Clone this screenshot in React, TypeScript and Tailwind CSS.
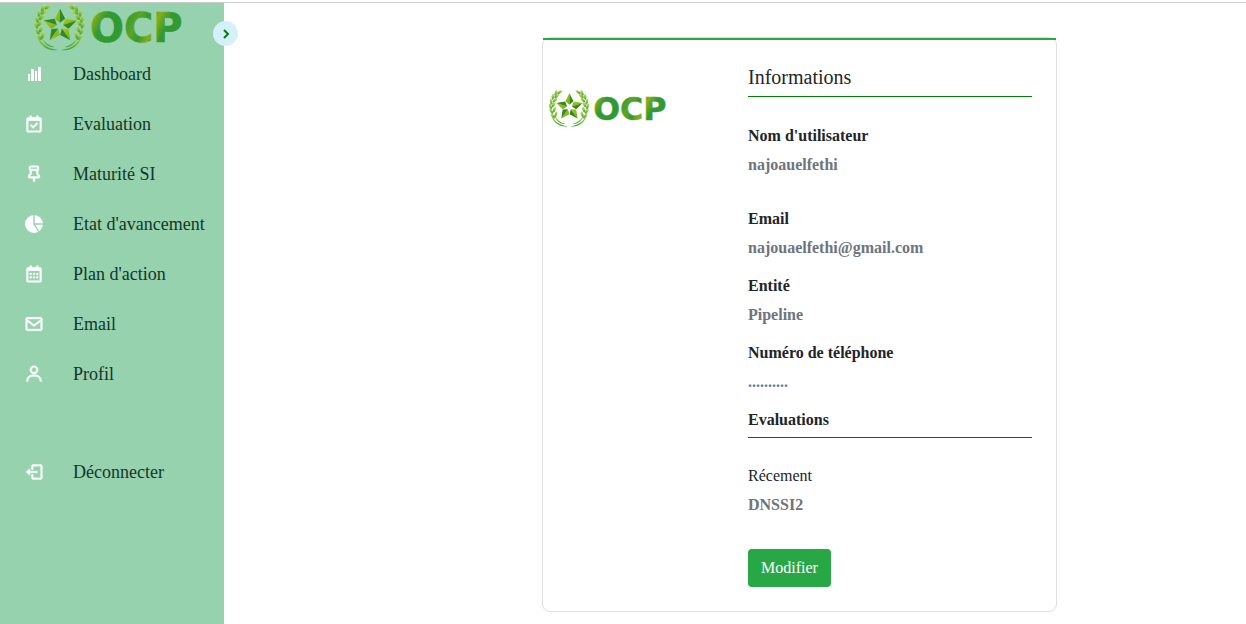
import { useId, type ReactNode } from "react";
import { BiCalendar, BiCalendarCheck, BiEnvelope, BiLogOut, BiPin, BiUser } from "react-icons/bi";

const leaves = [
  [5, 34, -42], [9, 32, 20], [3, 28, -32], [7, 26, 26], [2, 22, -22], [6, 20, 34],
  [3, 16, -12], [8, 14, 46], [5, 10, 2], [10, 9, 54], [9, 5, 20], [14, 4, 58],
];

function polar(radius: number, degrees: number) {
  const a = (degrees * Math.PI) / 180;
  return `${(26 + radius * Math.sin(a)).toFixed(2)},${(23 - radius * Math.cos(a)).toFixed(2)}`;
}

function Branch({ fill }: { fill: string }) {
  return (
    <g fill={fill}>
      <path d="M2 27C4 39 13 46 24 47C14 49 3 42 2 27Z" />
      <path d="M7 32C10 39 15 43 21 44C14 45 8 40 7 32Z" />
      {leaves.map(([x, y, r]) => (
        <ellipse key={`${x}-${y}`} cx={x} cy={y} rx="1.6" ry="3.8" transform={`rotate(${r} ${x} ${y})`} />
      ))}
    </g>
  );
}

function OcpLogo({ className }: { className: string }) {
  const id = useId();
  const word = `${id}word`;
  const leaf = `${id}leaf`;
  const tip = `${id}tip`;
  return (
    <svg viewBox="0 0 152 48" className={className} role="img" aria-label="OCP">
      <defs>
        <linearGradient id={word} x1="0" y1="0" x2="1" y2="0.25">
          <stop offset="0" stopColor="#3c9c2c" />
          <stop offset="0.1" stopColor="#86ad19" />
          <stop offset="0.22" stopColor="#329a30" />
          <stop offset="0.42" stopColor="#2f9a31" />
          <stop offset="0.56" stopColor="#5da525" />
          <stop offset="0.66" stopColor="#329a30" />
          <stop offset="0.76" stopColor="#86ad19" />
          <stop offset="0.88" stopColor="#329a30" />
        </linearGradient>
        <linearGradient id={leaf} x1="0" y1="0" x2="0" y2="1">
          <stop offset="0" stopColor="#c3dd86" />
          <stop offset="0.5" stopColor="#8cc43c" />
          <stop offset="1" stopColor="#3ba336" />
        </linearGradient>
        <linearGradient id={tip} x1="0" y1="0" x2="1" y2="1">
          <stop offset="0" stopColor="#b9c90c" />
          <stop offset="1" stopColor="#6aad1c" />
        </linearGradient>
      </defs>
      <Branch fill={`url(#${leaf})`} />
      <g transform="translate(51 0) scale(-1 1)">
        <Branch fill={`url(#${leaf})`} />
      </g>
      {[0, 72, 144, 216, 288].map((a) => (
        <g key={a}>
          <polygon points={`${polar(17.5, a)} ${polar(9, a - 35)} ${polar(3.2, a)}`} fill={`url(#${tip})`} />
          <polygon points={`${polar(17.5, a)} ${polar(9, a + 35)} ${polar(3.2, a)}`} fill="#2f8a20" />
        </g>
      ))}
      <text
        x="56"
        y="39"
        fontSize="40"
        fontWeight="700"
        fill={`url(#${word})`}
        stroke={`url(#${word})`}
        strokeWidth="0.6"
        className="font-['DejaVu_Sans',sans-serif]"
      >
        OCP
      </text>
    </svg>
  );
}

function BarsIcon() {
  return (
    <svg viewBox="0 0 20 20" className="size-5" fill="currentColor" aria-hidden="true">
      <rect x="4" y="10" width="2" height="7" />
      <rect x="7" y="5" width="3" height="12" />
      <rect x="11" y="7" width="2" height="10" />
      <rect x="14" y="3" width="3" height="14" />
    </svg>
  );
}

function PieIcon() {
  return (
    <svg viewBox="0 0 20 20" className="size-5" aria-hidden="true">
      <circle cx="10" cy="10" r="9" fill="currentColor" />
      <path d="M10 1V10H19M10 10L15 18" fill="none" stroke="#96d2ad" strokeWidth="1.4" />
    </svg>
  );
}

function NavItem({ icon, label }: { icon: ReactNode; label: string }) {
  return (
    <a href="#" className="flex h-[50px] items-center gap-[29px] pl-6 text-lg text-[#12372a]">
      <span className="flex w-5 justify-center text-xl text-white">{icon}</span>
      <span className="whitespace-nowrap">{label}</span>
    </a>
  );
}

function Field({ label, value }: { label: string; value: string }) {
  return (
    <div>
      <dt className="mb-2 leading-[19px] font-bold text-[#212529]">{label}</dt>
      <dd className="leading-6 font-bold text-[#6c757d]">{value}</dd>
    </div>
  );
}

export default function App() {
  return (
    <div className="flex min-h-screen flex-col bg-white font-['Liberation_Serif',serif] text-base text-[#212529]">
      <div className="h-[3px] border-b border-[#cccccc]" />
      <div className="flex flex-1">
        <aside className="relative w-56 shrink-0 bg-[#96d2ad]">
          <div className="h-[46px] pl-[34px]">
            <OcpLogo className="h-12 w-[152px]" />
          </div>
          <button
            type="button"
            aria-label="Basculer le menu"
            className="absolute top-[18px] -right-[14px] flex size-[25px] items-center justify-center rounded-full bg-[#d4f1fb] text-[#008000]"
          >
            <svg viewBox="0 0 12 12" className="size-3" fill="none" stroke="currentColor" strokeWidth="2" aria-hidden="true">
              <path d="M4 2L8 6L4 10" />
            </svg>
          </button>
          <nav aria-label="Menu principal">
            <NavItem icon={<BarsIcon />} label="Dashboard" />
            <NavItem icon={<BiCalendarCheck strokeWidth={0.5} />} label="Evaluation" />
            <NavItem icon={<BiPin strokeWidth={0.5} />} label="Maturité SI" />
            <NavItem icon={<PieIcon />} label="Etat d'avancement" />
            <NavItem icon={<BiCalendar strokeWidth={0.5} />} label="Plan d'action" />
            <NavItem icon={<BiEnvelope strokeWidth={0.5} />} label="Email" />
            <NavItem icon={<BiUser strokeWidth={0.5} />} label="Profil" />
            <div className="mt-12">
              <NavItem icon={<BiLogOut strokeWidth={0.5} />} label="Déconnecter" />
            </div>
          </nav>
        </aside>

        <main className="flex flex-1 items-start justify-center pt-[34px] pl-[129px]">
          <section className="relative flex w-full max-w-[515px] rounded-lg border border-[#dfdfdf]">
            <div className="absolute inset-x-0 top-0 h-0.5 bg-[#28a745]" />
            <div className="w-[205px] shrink-0 pt-[51px] pl-[5px]">
              <OcpLogo className="h-[38px] w-[122px]" />
            </div>
            <div className="flex-1 pt-[27px] pr-6 pb-6">
              <h1 className="border-b border-[#008000] pb-[7px] text-xl leading-6">Informations</h1>
              <dl className="mt-[29px] flex flex-col gap-4">
                <Field label="Nom d'utilisateur" value="najoauelfethi" />
                <div className="mt-4">
                  <Field label="Email" value="najouaelfethi@gmail.com" />
                </div>
                <Field label="Entité" value="Pipeline" />
                <Field label="Numéro de téléphone" value=".........." />
              </dl>
              <h2 className="mt-4 border-b border-[#0a6b0a] pb-2 leading-[19px] font-bold">Evaluations</h2>
              <h3 className="mt-7 mb-2 leading-[19px]">Récement</h3>
              <p className="leading-6 font-bold text-[#6c757d]">DNSSI2</p>
              <button type="button" className="mt-8 rounded bg-[#28a745] px-[13px] py-[7px] leading-6 text-white">
                Modifier
              </button>
            </div>
          </section>
        </main>
      </div>
    </div>
  );
}
